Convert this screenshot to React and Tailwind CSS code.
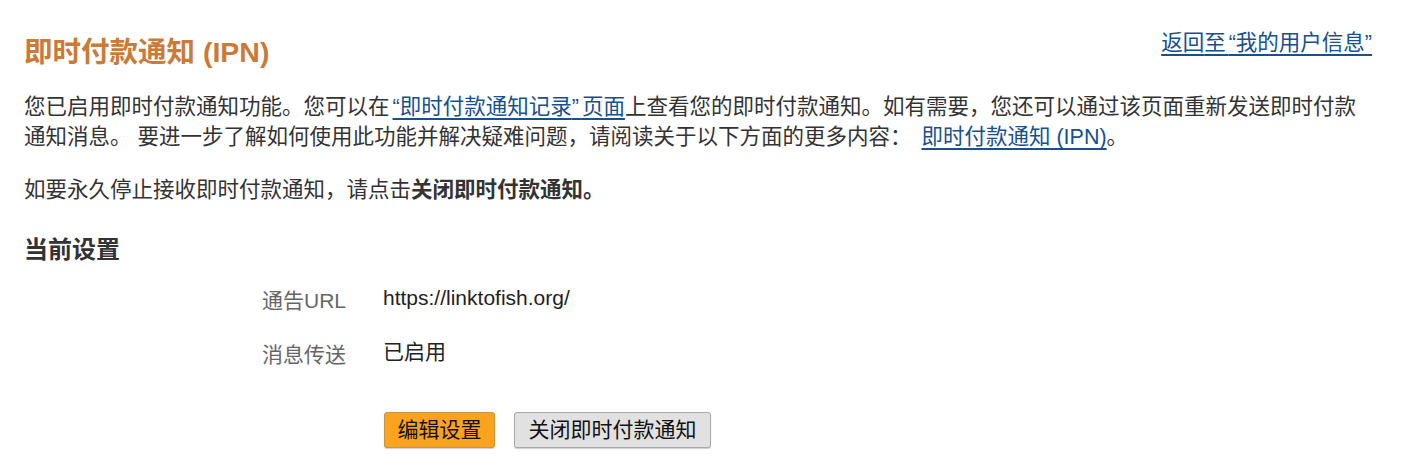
export default function App() {
  const font = { fontFamily: '"Liberation Sans", "Noto Sans CJK SC", sans-serif' };
  return (
    <div className="min-h-[474px] bg-white pl-[24px] pr-[50px] pt-[32px] text-[#333333]" style={font}>
      <div className="flex items-start justify-between">
        <h1 className="text-[28.5px] font-bold leading-[40px] text-[#c97b37]">即时付款通知 (IPN)</h1>
        <a href="#" className="mt-[-4px] text-[21.5px] leading-[30px] text-[#16508f] underline underline-offset-[4px]">
          返回<span className="tracking-[3px]">至</span>“我的用户信息”
        </a>
      </div>
      <p className="mt-[20px] text-[21.5px] leading-[30px]">
        您已启用即时付款通知功能。您可以<span className="tracking-[3px]">在</span>
        <a href="#" className="text-[#16508f] underline underline-offset-[4px]">
          “即时付款通知记录<span className="tracking-[3px]">”</span>页面
        </a>
        上查看您的即时付款通知。如有需要，您还可以通过该页面重新发送即时付款通知消息。 要进一步了解如何使用此功能并解决疑难问题，请阅读关于以下方面的更多内容：{' '}
        <a href="#" className="ml-[4px] text-[#16508f] underline underline-offset-[4px]">即时付款通知 (IPN)</a>。
      </p>
      <p className="mt-[23px] text-[21.5px] leading-[30px]">
        如要永久停止接收即时付款通知，请点击<span className="font-bold">关闭即时付款通知。</span>
      </p>
      <h2 className="mt-[30px] text-[24px] font-bold leading-[30px] text-[#333333]">当前设置</h2>
      <div className="mt-[18px] grid grid-cols-[238px_121px_1fr] gap-y-[21px]">
        <div />
        <div className="pt-[3px] text-[21px] leading-[30px] text-[#666666]">通告URL</div>
        <div className="text-[21px] leading-[30px] text-[#222222]">https://linktofish.org/</div>
        <div />
        <div className="pt-[3px] text-[21px] leading-[30px] text-[#666666]">消息传送</div>
        <div className="text-[21px] leading-[30px] text-[#222222]">已启用</div>
      </div>
      <div className="mt-[42px] flex gap-[19px] pl-[360px]">
        <button className="h-[36px] w-[111px] rounded-[3px] border border-[#c8963e] bg-[#fba31e] text-[21px] leading-[30px] text-[#111111] shadow-[0_1px_1px_rgba(0,0,0,0.2)]">
          编辑设置
        </button>
        <button className="h-[36px] w-[197px] rounded-[3px] border border-[#a8a8a8] bg-[#e1e1e1] text-[21px] leading-[30px] text-[#111111] shadow-[0_1px_1px_rgba(0,0,0,0.2)]">
          关闭即时付款通知
        </button>
      </div>
    </div>
  );
}
